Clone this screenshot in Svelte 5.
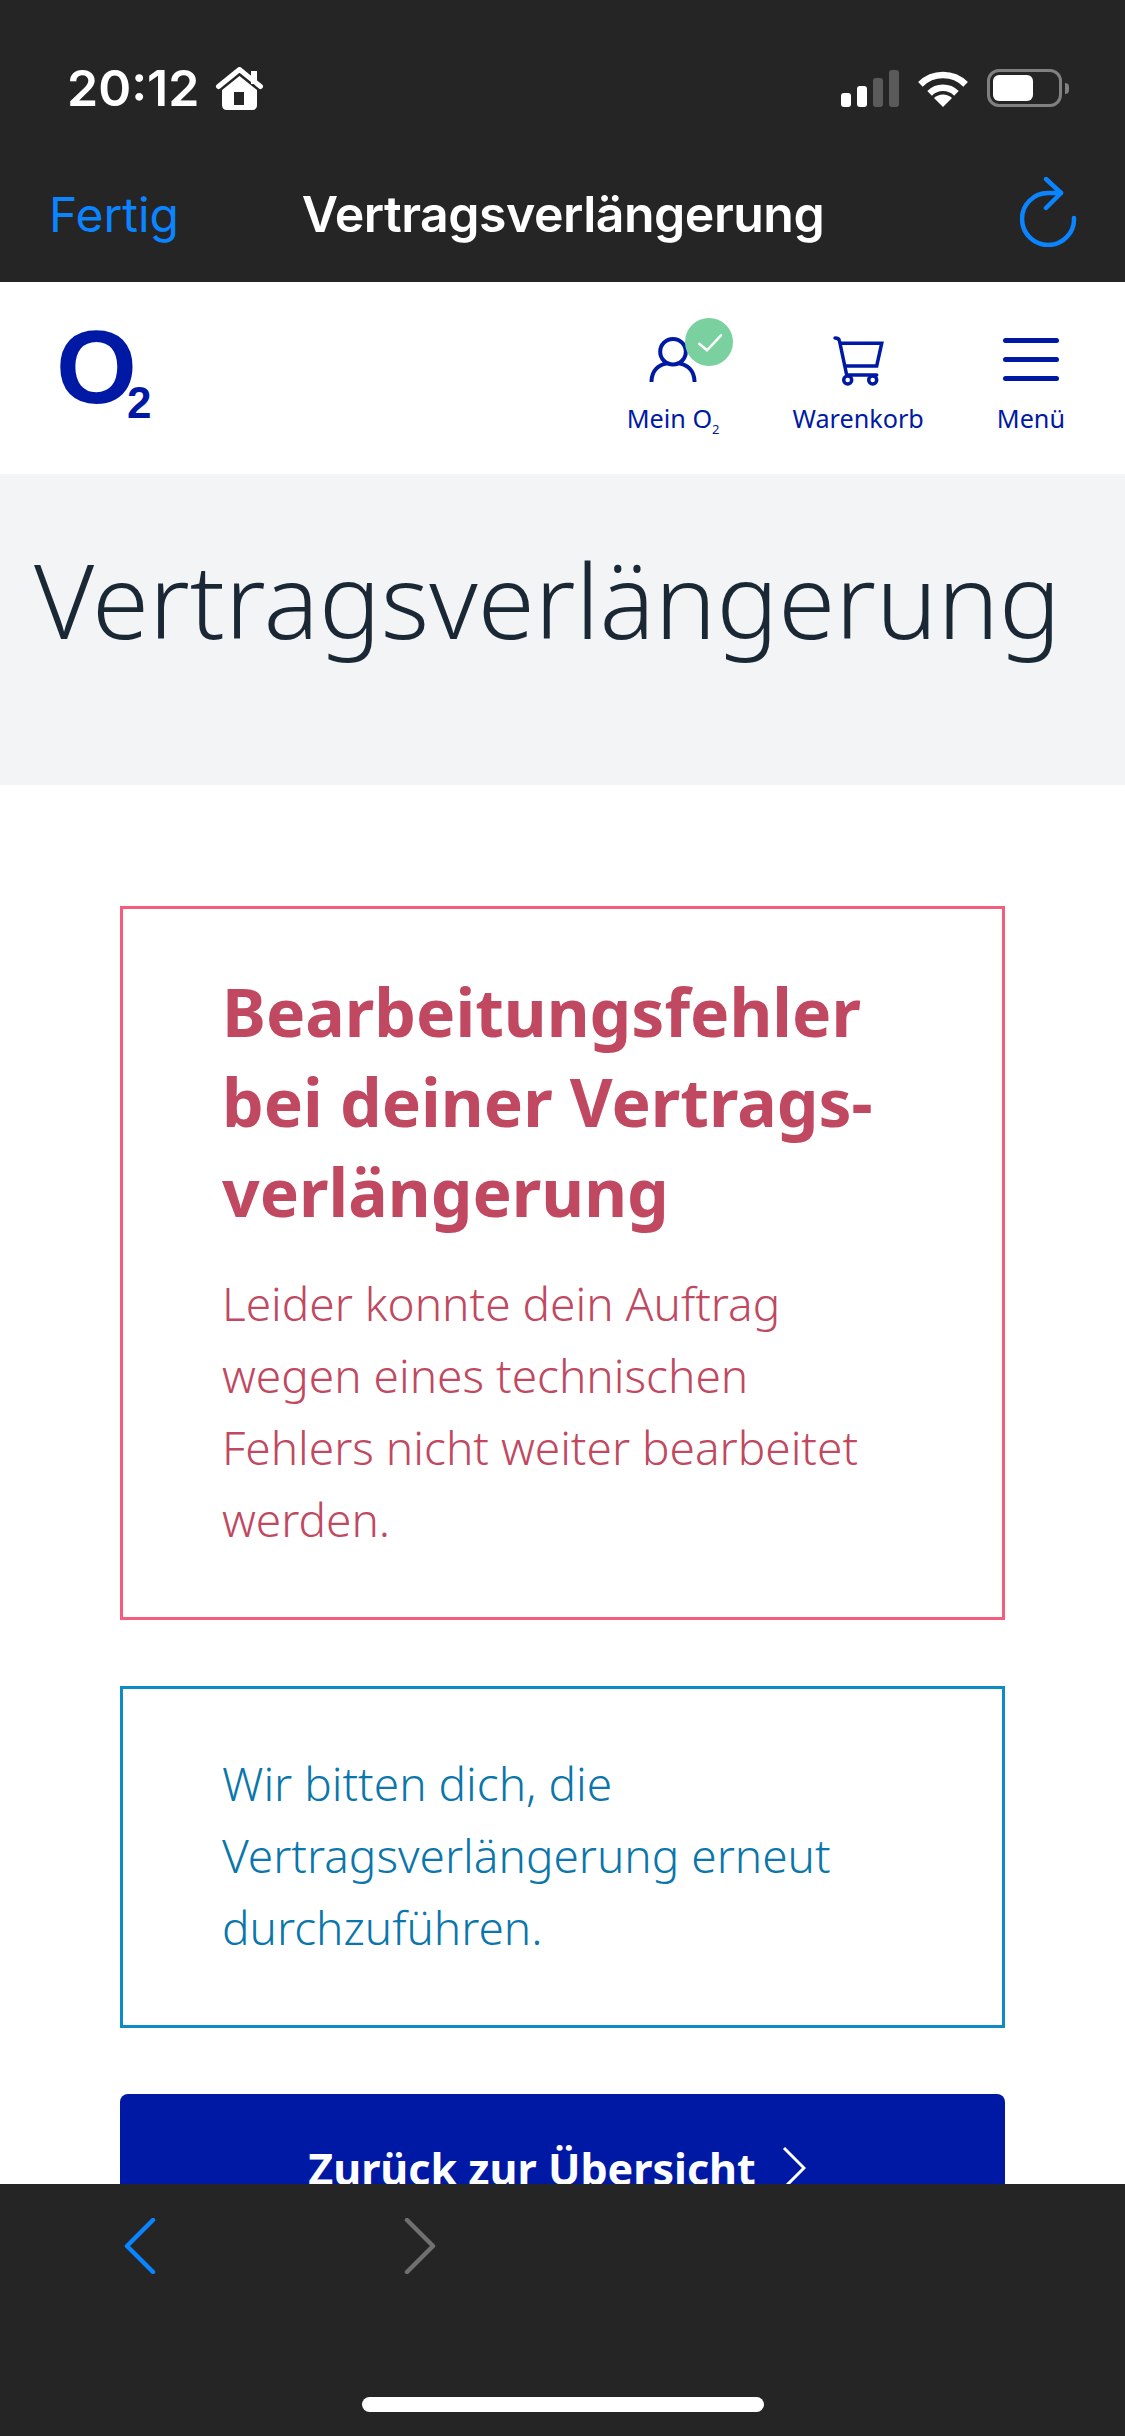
<script lang="ts">
  const errorLines = ["Leider konnte dein Auftrag", "wegen eines technischen", "Fehlers nicht weiter bearbeitet", "werden."];
  const infoLines = ["Wir bitten dich, die", "Vertragsverlängerung erneut", "durchzuführen."];
</script>

<div class="screen">
  <div class="topbar">
    <div class="status">
      <div class="clock">
        <span class="time">20:12</span>
        <svg class="home" viewBox="0 0 49 43" width="49" height="43">
          <rect x="36" y="4" width="6" height="13" fill="#fff"/>
          <path d="M3.500 19.500 L24.500 2.500 L45.500 19.500" fill="none" stroke="#fff" stroke-width="5" stroke-linecap="round" stroke-linejoin="round"/>
          <path fill-rule="evenodd" d="M24.500 9 L42 23 V38 Q42 43 37 43 H12 Q7 43 7 38 V23 Z M19 25 H29 V38 H19 Z" fill="#fff"/>
        </svg>
      </div>
      <div class="indicators">
        <svg viewBox="0 0 58 37" width="58" height="37">
          <rect x="0" y="23" width="10" height="14" rx="3" fill="#fff"/>
          <rect x="16" y="16" width="10" height="21" rx="3" fill="#fff"/>
          <rect x="32" y="8" width="10" height="29" rx="3" fill="#5a5a5a"/>
          <rect x="48" y="0" width="10" height="37" rx="3" fill="#5a5a5a"/>
        </svg>
        <svg viewBox="0 0 50 37" width="50" height="37">
          <path d="M25 37 L16 28 A13 13 0 0 1 34 28 Z" fill="#fff"/>
          <path d="M11.600 23.400 A19 19 0 0 1 38.400 23.400" fill="none" stroke="#fff" stroke-width="6.500"/>
          <path d="M2.400 14.400 A32 32 0 0 1 47.600 14.400" fill="none" stroke="#fff" stroke-width="6.500"/>
        </svg>
        <div class="battery">
          <div class="cell"><div class="charge"></div></div>
          <div class="nub"></div>
        </div>
      </div>
    </div>
    <div class="navbar">
      <span class="done">Fertig</span>
      <span class="page-title">Vertragsverlängerung</span>
      <svg class="reload" viewBox="0 0 57 70" width="57" height="70">
        <path d="M41 16 H28 A26 26 0 1 0 54 41" fill="none" stroke="#0a84ff" stroke-width="4.500" stroke-linecap="round"/>
        <path d="M26 2 L41 16 L26 31" fill="none" stroke="#0a84ff" stroke-width="4.500" stroke-linecap="round" stroke-linejoin="round"/>
      </svg>
    </div>
  </div>

  <header class="site-header">
    <div class="logo">O<sub>2</sub></div>
    <nav class="site-nav">
      <div class="nav-item mein">
        <span class="nav-icon">
          <svg viewBox="0 0 48 46" width="48" height="46">
            <circle cx="24" cy="15.700" r="12.800" fill="none" stroke="#0019a5" stroke-width="4"/>
            <path d="M2.500 45 C3 34 10 29 17 27.500 M45.500 45 C45 34 38 29 31 27.500" fill="none" stroke="#0019a5" stroke-width="4" stroke-linecap="round"/>
          </svg>
          <span class="badge">
            <svg viewBox="0 0 48 48" width="48" height="48">
              <path d="M14.300 25.700 L22 32.300 L36 17.300" fill="none" stroke="#fff" stroke-width="2.500" stroke-linecap="round"/>
            </svg>
          </span>
        </span>
        <span class="nav-label">Mein O<sub>2</sub></span>
      </div>
      <div class="nav-item">
        <span class="nav-icon">
          <svg viewBox="0 0 52 50" width="52" height="50">
            <path d="M3 2 Q7 2 7.500 5 L14.700 39 H44.700" fill="none" stroke="#0019a5" stroke-width="3.500" stroke-linecap="round"/>
            <path d="M8 7.300 H49.700 L44.700 30 H12" fill="none" stroke="#0019a5" stroke-width="3.500"/>
            <circle cx="15.700" cy="44" r="4" fill="none" stroke="#0019a5" stroke-width="3.500"/>
            <circle cx="40.700" cy="44" r="4" fill="none" stroke="#0019a5" stroke-width="3.500"/>
          </svg>
        </span>
        <span class="nav-label">Warenkorb</span>
      </div>
      <div class="nav-item">
        <span class="nav-icon burger"><i></i><i></i><i></i></span>
        <span class="nav-label">Menü</span>
      </div>
    </nav>
  </header>

  <main class="content">
    <div class="hero"><h1>Vertragsverlängerung</h1></div>
    <div class="body">
      <section class="box error">
        <h2>Bearbeitungsfehler<br />bei deiner Vertrags-<br />verlängerung</h2>
        <p>{#each errorLines as line}<span>{line}</span>{/each}</p>
      </section>
      <section class="box info">
        <p>{#each infoLines as line}<span>{line}</span>{/each}</p>
      </section>
      <button class="back">
        Zurück zur Übersicht
        <svg viewBox="0 0 24 44" width="24" height="44">
          <path d="M2 2 L22 22 L2 42" fill="none" stroke="#fff" stroke-width="3"/>
        </svg>
      </button>
    </div>
  </main>

  <footer class="toolbar">
    <div class="arrows">
      <svg viewBox="0 0 32 56" width="32" height="56">
        <path d="M29 2 L3 28 L29 54" fill="none" stroke="#0a84ff" stroke-width="4.500" stroke-linecap="round" stroke-linejoin="round"/>
      </svg>
      <svg viewBox="0 0 32 56" width="32" height="56">
        <path d="M3 2 L29 28 L3 54" fill="none" stroke="#707070" stroke-width="4.500" stroke-linecap="round" stroke-linejoin="round"/>
      </svg>
    </div>
    <div class="home-indicator"></div>
  </footer>
</div>

<style>
  :global(body) { margin: 0; background: #fff; }
  .screen {
    width: 1125px;
    height: 2436px;
    display: flex;
    flex-direction: column;
    overflow: hidden;
    font-family: "Noto Sans", "Open Sans", sans-serif;
  }

  .topbar {
    height: 282px;
    flex: none;
    background: #252525;
    color: #fff;
    font-family: Inter, Roboto, sans-serif;
    box-sizing: border-box;
    padding-top: 66px;
  }
  .status {
    height: 44px;
    display: flex;
    justify-content: space-between;
    align-items: center;
    padding: 0 56px 0 67px;
  }
  .clock { display: flex; align-items: center; gap: 16px; }
  .time { font-size: 50px; font-weight: 600; line-height: 44px; }
  .indicators { display: flex; align-items: center; gap: 19px; }
  .battery { display: flex; align-items: center; gap: 3px; }
  .cell {
    width: 75px;
    height: 38px;
    box-sizing: border-box;
    border: 3px solid #808080;
    border-radius: 12px;
    padding: 3px;
  }
  .charge { width: 40px; height: 100%; background: #fff; border-radius: 6px; }
  .nub { width: 4px; height: 11px; background: #808080; border-radius: 0 5px 5px 0; }

  .navbar {
    display: grid;
    grid-template-columns: 1fr auto 1fr;
    align-items: center;
    margin-top: 68px;
    padding: 0 48px 0 49px;
    height: 72px;
  }
  .done { font-size: 48px; color: #0a84ff; }
  .page-title { font-size: 50px; font-weight: 600; letter-spacing: -0.5px; }
  .reload { justify-self: end; margin-top: -4px; }

  .site-header {
    height: 192px;
    flex: none;
    background: #fff;
    display: flex;
    justify-content: space-between;
    padding: 0 60px 0 56px;
    box-sizing: border-box;
    color: #0019a5;
  }
  .logo {
    font-family: "Liberation Sans", Arial, sans-serif;
    font-size: 104px;
    font-weight: 700;
    line-height: 1;
    padding-top: 33px;
    letter-spacing: -10px;
  }
  .logo sub { font-size: 44px; vertical-align: -15px; line-height: 0; letter-spacing: 0; }
  .site-nav { display: flex; gap: 73px; padding-top: 54px; }
  .nav-item { display: flex; flex-direction: column; align-items: center; gap: 19px; }
  .nav-icon { position: relative; height: 48px; display: flex; justify-content: center; }
  .nav-label { font-size: 25.200px; line-height: 30px; white-space: nowrap; }
  .nav-label sub { font-size: 13px; line-height: 0; }
  .badge {
    position: absolute;
    left: 36px;
    top: -18px;
    width: 48px;
    height: 48px;
    border-radius: 50%;
    background: #7bd09f;
  }
  .badge svg { display: block; }
  .burger { width: 56px; flex-direction: column; justify-content: space-between; padding: 2px 0 3px; box-sizing: border-box; }
  .burger i { display: block; height: 5px; background: #0019a5; border-radius: 3px; }

  .content { flex: 1; min-height: 0; overflow: hidden; }
  .hero {
    height: 311px;
    background: #f3f4f6;
    box-sizing: border-box;
    padding: 64px 0 0 34px;
  }
  h1 {
    margin: 0;
    font-size: 103.300px;
    font-weight: 300;
    line-height: 1.2;
    color: #1a2836;
    white-space: nowrap;
  }
  .body { padding: 121px 120px 0; display: flex; flex-direction: column; gap: 66px; }
  .box { border: 3px solid; padding: 57px 40px 62px 99px; }
  .error { border-color: #f65c7c; color: #c04860; }
  .info { border-color: #0d8bc7; color: #0a76ab; padding-top: 58px; padding-bottom: 62px; }
  h2 { margin: 0 0 31px; font-size: 66px; line-height: 90px; font-weight: 700; white-space: nowrap; }
  .box p { margin: 0; font-size: 46px; line-height: 72px; font-weight: 300; }
  .box p span { display: block; white-space: nowrap; }
  .back {
    height: 148px;
    flex: none;
    border: none;
    border-radius: 8px;
    background: #0019a5;
    color: #fff;
    font: 700 43px "Noto Sans", sans-serif;
    display: flex;
    align-items: center;
    justify-content: center;
    gap: 26px;
    padding: 0 11px 0 0;
  }

  .toolbar {
    height: 252px;
    flex: none;
    background: #252525;
    display: flex;
    flex-direction: column;
    align-items: center;
    box-sizing: border-box;
    padding-top: 34px;
  }
  .arrows { align-self: flex-start; display: flex; gap: 248px; padding-left: 124px; }
  .home-indicator { width: 402px; height: 15px; background: #fff; border-radius: 8px; margin-top: 123px; }
</style>
